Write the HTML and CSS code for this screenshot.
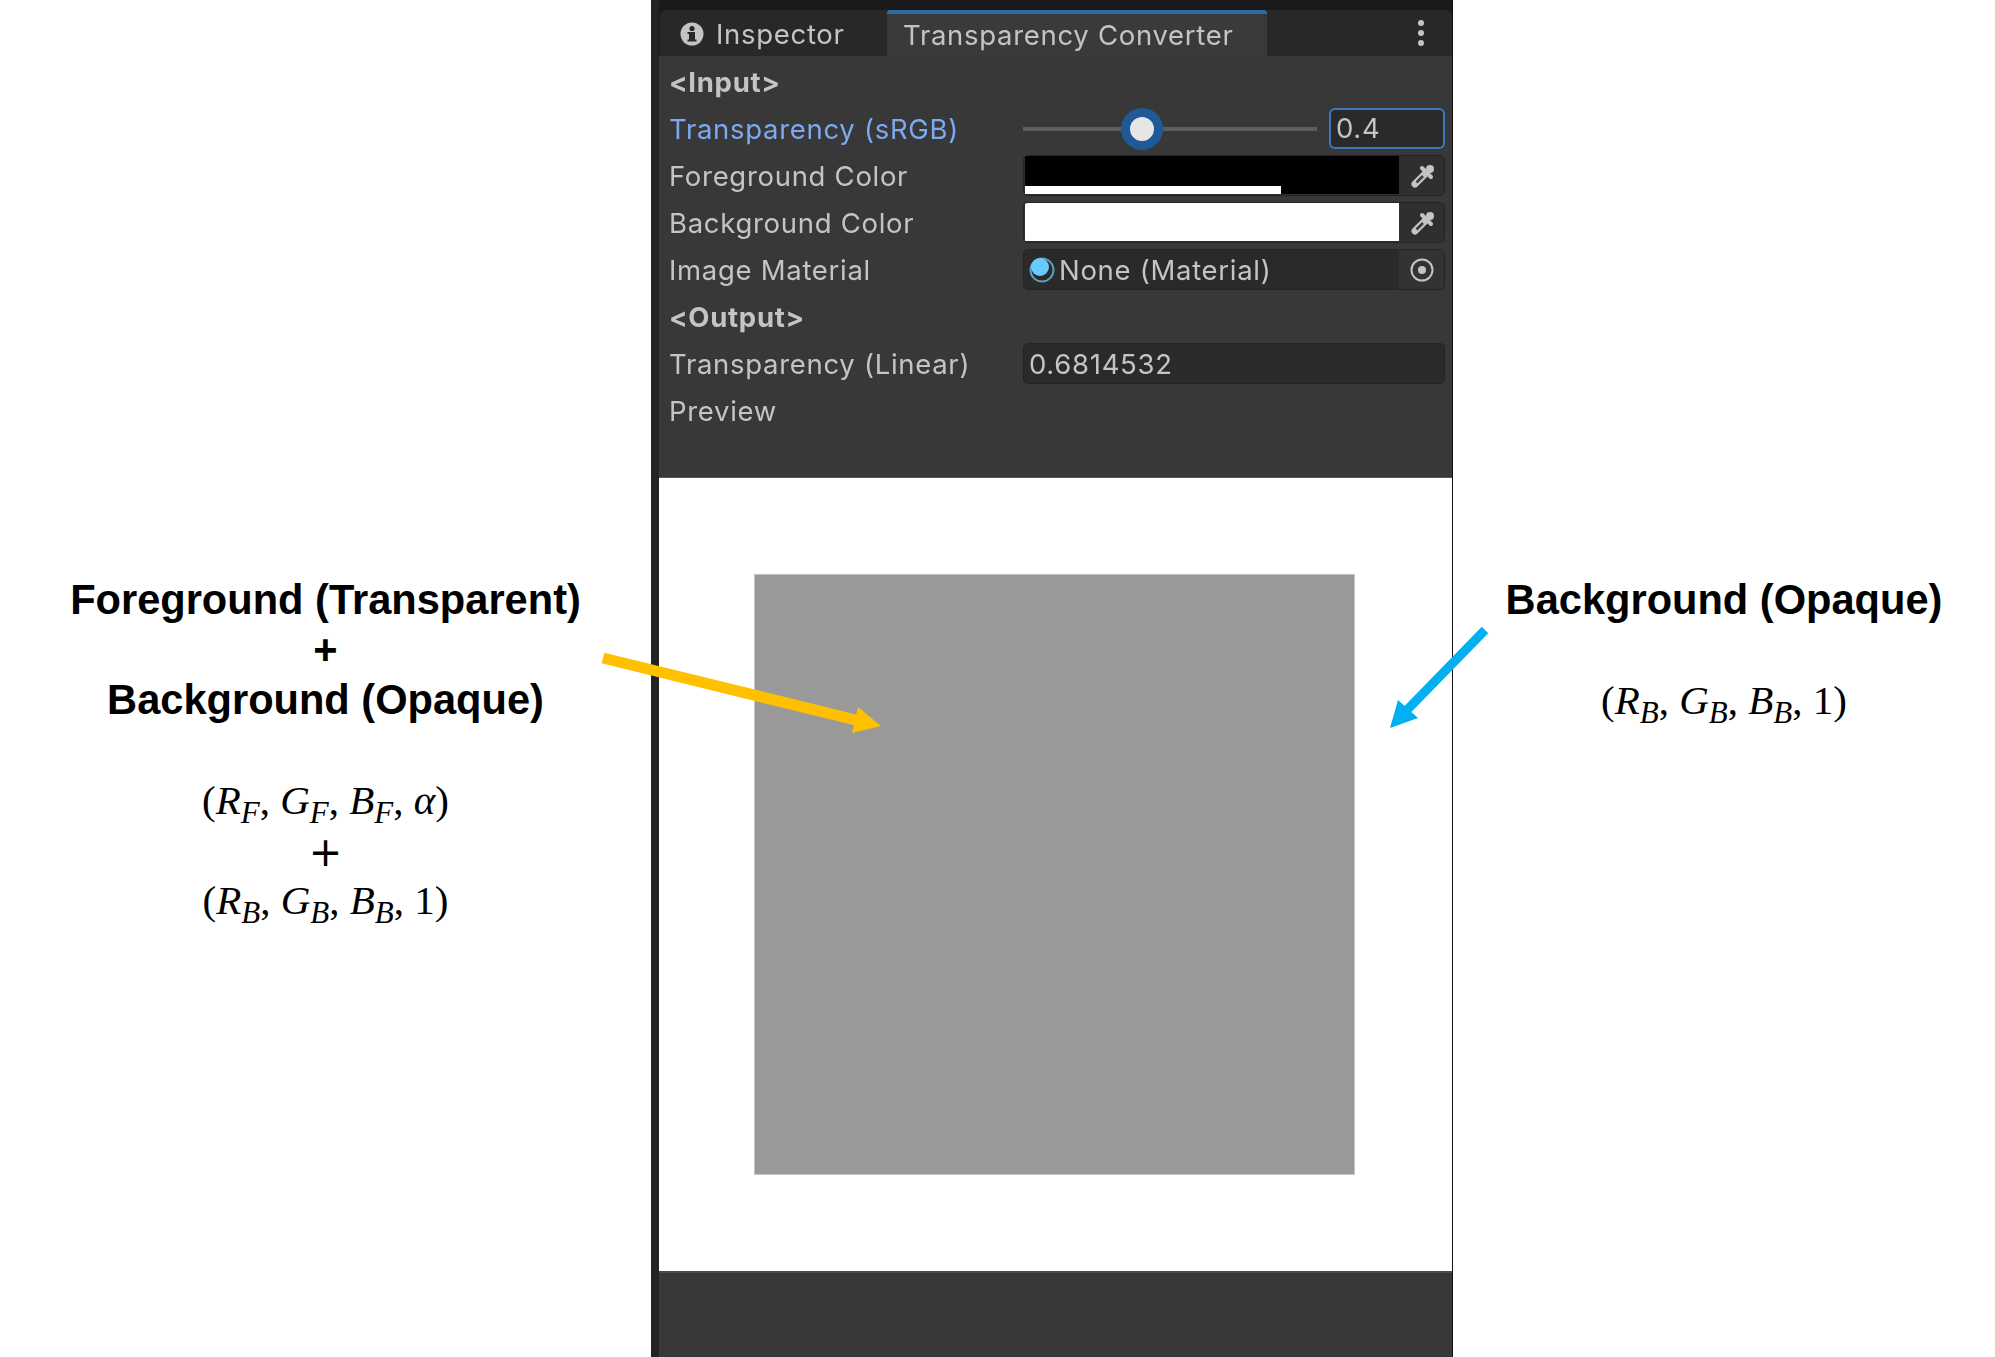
FILE: index.html
```html
<!doctype html>
<html>
<head>
<meta charset="UTF-8">
<title>Transparency Converter</title>
<link rel="stylesheet" href="styles.css">
</head>
<body>
	<div class="note note_left">
		<div class="heading">Foreground (Transparent)</div>
		<div class="heading">+</div>
		<div class="heading">Background (Opaque)</div>
		<div class="blank"></div>
		<div class="math">(<i>R<sub>F</sub></i>, <i>G<sub>F</sub></i>, <i>B<sub>F</sub></i>, <i>α</i>)</div>
		<div class="math math_plus">+</div>
		<div class="math">(<i>R<sub>B</sub></i>, <i>G<sub>B</sub></i>, <i>B<sub>B</sub></i>, 1)</div>
	</div>

	<div class="window">
		<div class="tabs">
			<div class="tab">
				<svg class="info" width="24" height="24" viewBox="0 0 24 24">
					<circle cx="12" cy="12" r="11.5" fill="#c4c4c4"/>
					<rect x="9" y="10" width="6" height="9" fill="#282828"/>
					<rect x="7.500" y="10" width="3" height="2" fill="#282828"/>
					<rect x="7.500" y="17.500" width="9" height="2" fill="#282828"/>
					<circle cx="12" cy="6.500" r="2.600" fill="#282828"/>
				</svg>
				Inspector
			</div>
			<div class="tab tab_active">Transparency Converter</div>
			<div class="tabs_space">
				<div class="dots"><span></span><span></span><span></span></div>
			</div>
		</div>

		<div class="rows">
			<div class="row row_bold"><div class="label">&lt;Input&gt;</div></div>
			<div class="row">
				<div class="label label_focus">Transparency (sRGB)</div>
				<div class="slider">
					<div class="track"><div class="thumb"></div></div>
					<div class="number">0.4</div>
				</div>
			</div>
			<div class="row">
				<div class="label">Foreground Color</div>
				<div class="field">
					<div class="swatch swatch_black"><div class="alpha"></div></div>
					<div class="picker">
						<svg class="dropper" width="28" height="28" viewBox="0 0 28 28">
							<path d="M6 22L16 12" stroke="#c4c4c4" stroke-width="7" stroke-linecap="round"/>
							<path d="M7.500 20.500L14 14" stroke="#3a3a3a" stroke-width="2.500"/>
							<path d="M13 6L22 15" stroke="#c4c4c4" stroke-width="4" stroke-linecap="round"/>
							<circle cx="21" cy="7" r="4" fill="#c4c4c4"/>
						</svg>
					</div>
				</div>
			</div>
			<div class="row">
				<div class="label">Background Color</div>
				<div class="field">
					<div class="swatch swatch_white"></div>
					<div class="picker">
						<svg class="dropper" width="28" height="28" viewBox="0 0 28 28">
							<path d="M6 22L16 12" stroke="#c4c4c4" stroke-width="7" stroke-linecap="round"/>
							<path d="M7.500 20.500L14 14" stroke="#3a3a3a" stroke-width="2.500"/>
							<path d="M13 6L22 15" stroke="#c4c4c4" stroke-width="4" stroke-linecap="round"/>
							<circle cx="21" cy="7" r="4" fill="#c4c4c4"/>
						</svg>
					</div>
				</div>
			</div>
			<div class="row">
				<div class="label">Image Material</div>
				<div class="field field_object">
					<svg class="sphere" width="26" height="26" viewBox="0 0 26 26">
						<circle cx="13" cy="13" r="11.500" fill="#2a2a2a" stroke="#5a9fbe" stroke-width="2"/>
						<circle cx="11" cy="10" r="9" fill="#66ccff"/>
					</svg>
					<div class="object_name">None (Material)</div>
					<div class="picker">
						<svg width="26" height="26" viewBox="0 0 26 26">
							<circle cx="13" cy="13" r="10.500" fill="none" stroke="#c4c4c4" stroke-width="2"/>
							<circle cx="13" cy="13" r="4" fill="#c4c4c4"/>
						</svg>
					</div>
				</div>
			</div>
			<div class="row row_bold"><div class="label">&lt;Output&gt;</div></div>
			<div class="row">
				<div class="label">Transparency (Linear)</div>
				<div class="field field_text">0.6814532</div>
			</div>
			<div class="row"><div class="label">Preview</div></div>
		</div>

		<div class="preview">
			<div class="square"></div>
		</div>
	</div>

	<div class="note note_right">
		<div class="heading">Background (Opaque)</div>
		<div class="blank"></div>
		<div class="math">(<i>R<sub>B</sub></i>, <i>G<sub>B</sub></i>, <i>B<sub>B</sub></i>, 1)</div>
	</div>

	<svg class="arrows" width="1995" height="1357" viewBox="0 0 1995 1357">
		<path d="M603 658L864 722" stroke="#ffc000" stroke-width="11" fill="none"/>
		<path d="M858 707L881 726L852 733Z" fill="#ffc000"/>
		<path d="M1485 630L1406 711" stroke="#00b0f0" stroke-width="9" fill="none"/>
		<path d="M1398 700L1418 718L1390 728Z" fill="#00b0f0"/>
	</svg>
</body>
</html>
```

FILE: styles.css
```css
* {
	box-sizing: border-box;
}
body {
	margin: 0;
	height: 1357px;
	overflow: hidden;
	display: grid;
	grid-template-columns: 651px 802px 1fr;
	background-color: #ffffff;
	font-family: "Liberation Sans", Arial, sans-serif;
}
.note {
	padding-top: 575px;
	text-align: center;
	color: #000000;
}
.heading {
	height: 50px;
	font-size: 41.6px;
	line-height: 50px;
	font-weight: bold;
	white-space: nowrap;
}
.blank {
	height: 50px;
}
.math {
	height: 50px;
	font-family: "Liberation Serif", "DejaVu Serif", serif;
	font-size: 41px;
	line-height: 50px;
	white-space: nowrap;
}
.math sub {
	font-size: 31px;
	line-height: 0;
}
.math_plus {
	font-family: "DejaVu Sans", sans-serif;
	font-size: 40px;
	line-height: 54px;
}
.window {
	display: flex;
	flex-direction: column;
	background-color: #383838;
	border-left: 8px solid #232323;
	border-right: 1px solid #111111;
	font-family: Inter, "Liberation Sans", sans-serif;
	font-size: 27.5px;
	letter-spacing: 0.7px;
	color: #c4c4c4;
}
.tabs {
	display: flex;
	height: 56px;
	padding-top: 10px;
	padding-left: 1px;
	background-color: #1a1a1a;
	flex: none;
	filter: blur(0.5px);
}
.tab {
	width: 227px;
	display: flex;
	align-items: center;
	gap: 12px;
	padding-left: 20px;
	padding-top: 2px;
	background-color: #282828;
	border-radius: 6px 0 0 0;
}
.tab_active {
	width: 380px;
	padding-left: 16px;
	padding-top: 0;
	background-color: #3a3a3a;
	border-top: 4px solid #2c6aa5;
	border-radius: 3px 3px 0 0;
}
.tabs_space {
	flex: 1;
	background-color: #282828;
	border-radius: 0 6px 0 0;
	position: relative;
}
.dots {
	position: absolute;
	right: 28px;
	top: 10px;
	display: flex;
	flex-direction: column;
	gap: 4px;
}
.dots span {
	width: 6px;
	height: 6px;
	border-radius: 3px;
	background-color: #c4c4c4;
}
.rows {
	height: 422px;
	padding-top: 2px;
	flex: none;
	border-bottom: 1px solid #555555;
	filter: blur(0.5px);
}
.row {
	height: 47px;
	display: flex;
	align-items: center;
	padding-left: 10px;
	padding-right: 7px;
}
.row_bold .label {
	font-weight: bold;
}
.label {
	width: 354px;
	flex: none;
}
.label_focus {
	color: #7baaf0;
}
.slider {
	flex: 1;
	display: flex;
	align-items: center;
	gap: 12px;
}
.track {
	width: 294px;
	height: 4px;
	background-color: #5e5e5e;
	position: relative;
}
.thumb {
	position: absolute;
	left: 98px;
	top: -19px;
	width: 42px;
	height: 42px;
	border-radius: 21px;
	background-color: #e6e6e6;
	border: 9px solid #1f5a96;
}
.number {
	flex: 1;
	height: 41px;
	line-height: 37px;
	padding-left: 5px;
	background-color: #2a2a2a;
	border: 2px solid #3a79bb;
	border-radius: 6px;
}
.field {
	flex: 1;
	height: 41px;
	display: flex;
	border: 1px solid #242424;
	border-radius: 5px;
	background-color: #2f2f2f;
	overflow: hidden;
}
.swatch {
	flex: 1;
	height: 38px;
	margin-left: 1px;
	position: relative;
}
.swatch_black {
	background-color: #000000;
}
.swatch_white {
	background-color: #ffffff;
}
.alpha {
	position: absolute;
	left: 0;
	bottom: 0;
	width: 256px;
	height: 8px;
	background-color: #ffffff;
}
.picker {
	width: 45px;
	flex: none;
	display: flex;
	align-items: center;
	justify-content: center;
}
.dropper {
	margin-left: 3px;
}
.field_object {
	align-items: center;
	background-color: #2a2a2a;
}
.field_object .picker {
	height: 100%;
	background-color: #333333;
}
.sphere {
	margin-left: 5px;
	margin-right: 4px;
	flex: none;
}
.object_name {
	flex: 1;
}
.field_text {
	align-items: center;
	padding-left: 5px;
	background-color: #2a2a2a;
}
.preview {
	height: 795px;
	flex: none;
	display: flex;
	align-items: center;
	justify-content: center;
	padding-right: 2px;
	background-color: #ffffff;
	border-bottom: 2px solid #4a4a4a;
}
.square {
	width: 601px;
	height: 601px;
	background-color: #999999;
	border: 1px solid #c4c4c4;
}
.arrows {
	position: absolute;
	left: 0;
	top: 0;
}
```
